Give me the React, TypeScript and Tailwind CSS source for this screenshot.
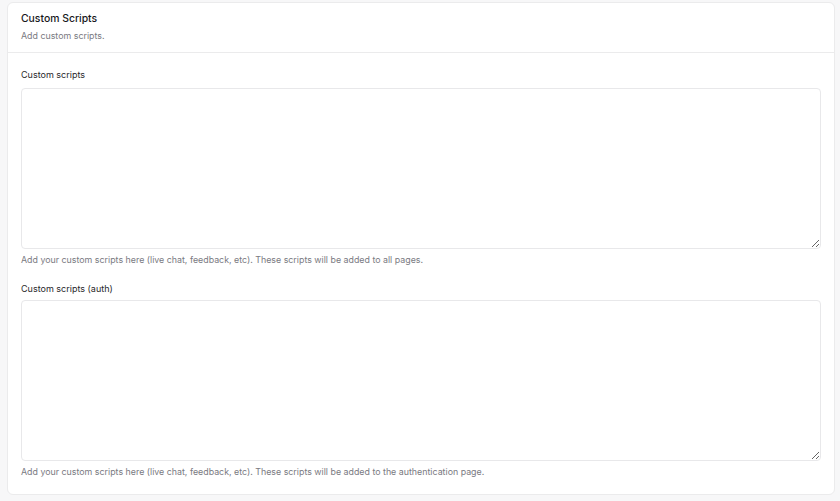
import React from "react";

export default function App() {
  return (
    <div
      className="w-[840px] h-[501px] bg-[#f7f7f8] pt-[2px] pl-[7px] pr-[5px]"
      style={{ fontFamily: "Inter, 'Noto Sans', sans-serif" }}
    >
      <div className="rounded-[6px] border border-[#ebebec] bg-white">
        <div className="px-[13px] pt-[8px] pb-[9px] border-b border-[#ebebec]">
          <div className="text-[10.4px] leading-[16px] font-medium text-[#18181b]">Custom Scripts</div>
          <div className="mt-[2px] text-[8.85px] leading-[14px] text-[#7a7a82]">Add custom scripts.</div>
        </div>
        <div className="px-[13px] pt-[15px] pb-[15px] flex flex-col">
          <label className="text-[9px] leading-[14px] text-[#27272a]">Custom scripts</label>
          <textarea className="mt-[6px] h-[161px] w-full rounded-[4px] border border-[#e8e8ea] bg-white resize-y outline-none" />
          <div className="mt-[4px] text-[8.85px] leading-[14px] text-[#7a7a82]">
            Add your custom scripts here (live chat, feedback, etc). These scripts will be added to all pages.
          </div>
          <label className="mt-[15px] text-[9px] leading-[14px] text-[#27272a]">Custom scripts (auth)</label>
          <textarea className="mt-[4px] h-[161px] w-full rounded-[4px] border border-[#e8e8ea] bg-white resize-y outline-none" />
          <div className="mt-[4px] text-[8.85px] leading-[14px] text-[#7a7a82]">
            Add your custom scripts here (live chat, feedback, etc). These scripts will be added to the authentication page.
          </div>
        </div>
      </div>
    </div>
  );
}
